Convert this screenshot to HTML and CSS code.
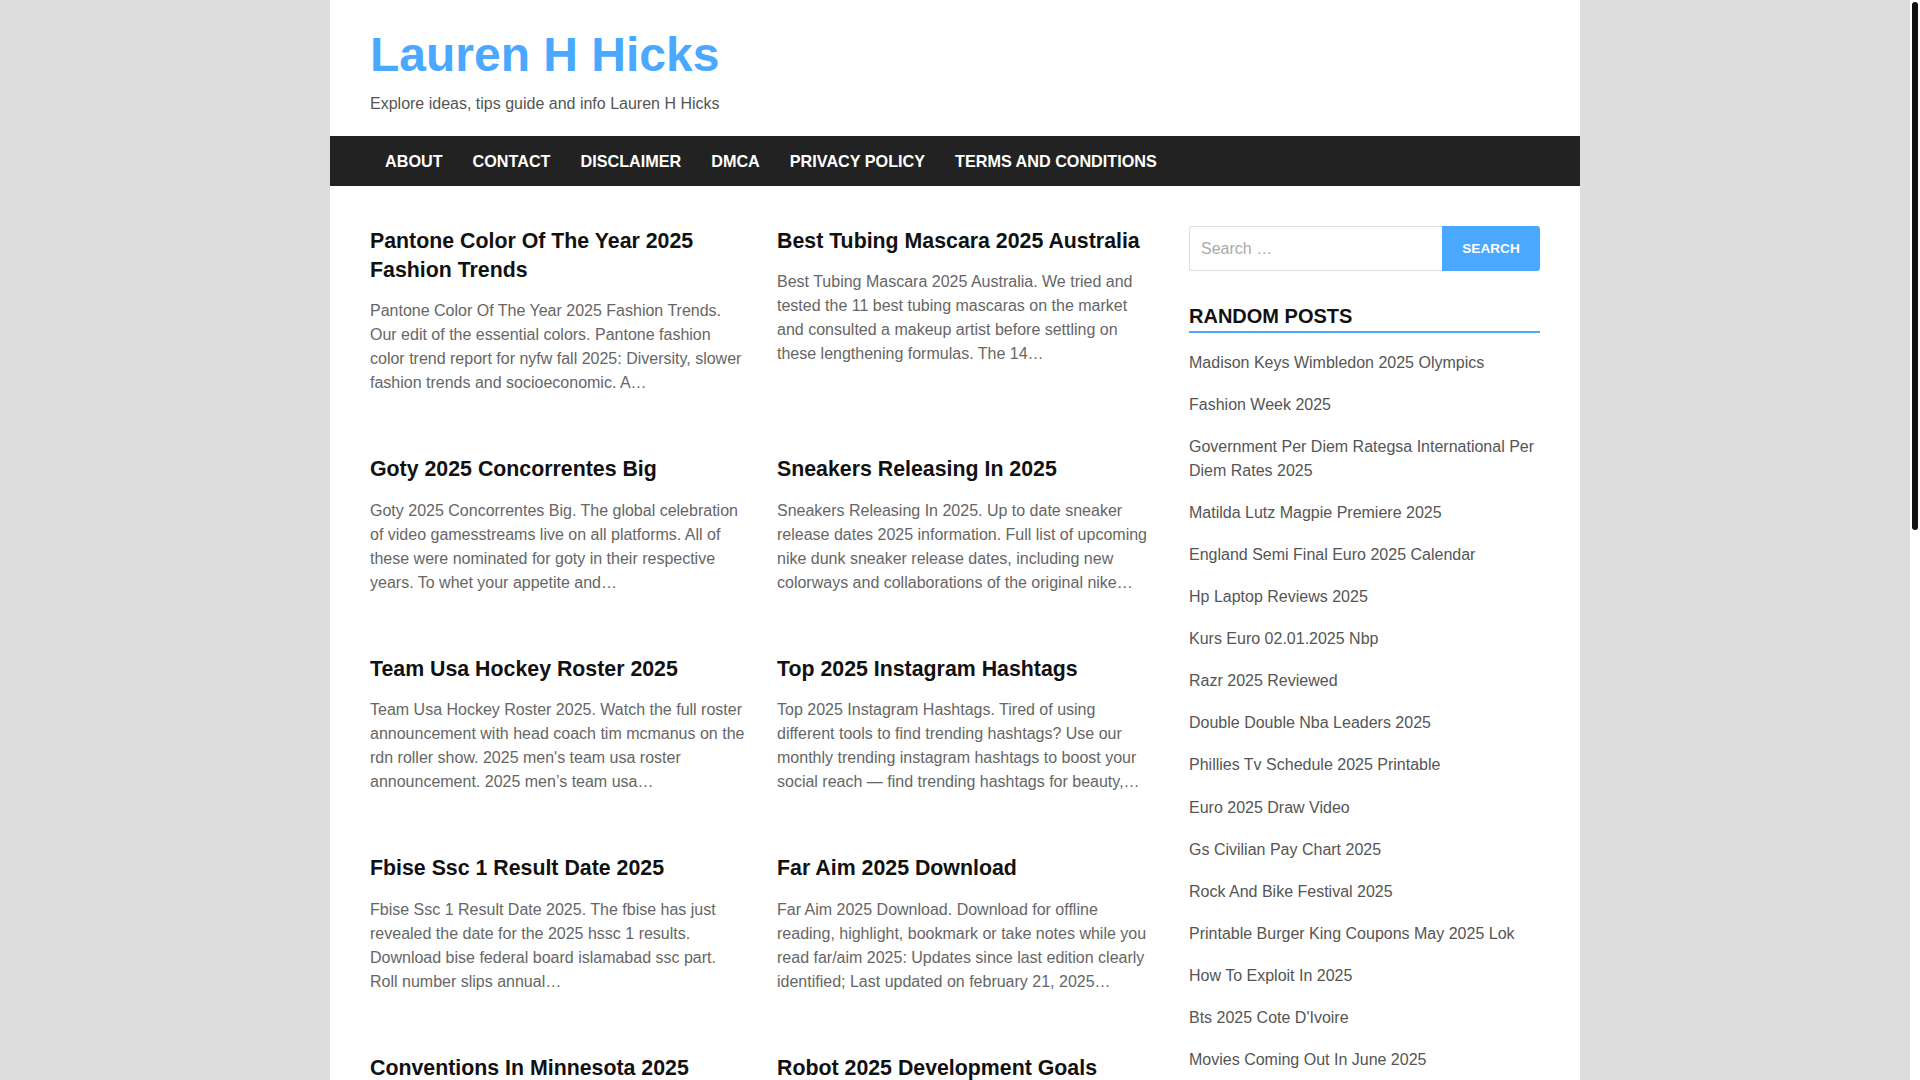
FILE: index.html
```html
<!DOCTYPE html>
<html lang="en">
<head>
<meta charset="utf-8">
<title>Lauren H Hicks</title>
<link rel="stylesheet" href="styles.css">
</head>
<body>
<div class="page">
  <header class="site-header">
    <h1 class="site-title">Lauren H Hicks</h1>
    <p class="tagline">Explore ideas, tips guide and info Lauren H Hicks</p>
  </header>
  <nav class="main-nav">
    <ul>
      <li><a href="#">About</a></li>
      <li><a href="#">Contact</a></li>
      <li><a href="#">Disclaimer</a></li>
      <li><a href="#">DMCA</a></li>
      <li><a href="#">Privacy Policy</a></li>
      <li><a href="#">Terms and Conditions</a></li>
    </ul>
  </nav>
  <div class="content-wrap">
    <main class="posts">
      <article class="post">
        <h2 class="post-title">Pantone Color Of The Year 2025 Fashion Trends</h2>
        <p class="post-excerpt">Pantone Color Of The Year 2025 Fashion Trends. Our edit of the essential colors. Pantone fashion color trend report for nyfw fall 2025: Diversity, slower fashion trends and socioeconomic. A…</p>
      </article>
      <article class="post">
        <h2 class="post-title">Best Tubing Mascara 2025 Australia</h2>
        <p class="post-excerpt">Best Tubing Mascara 2025 Australia. We tried and tested the 11 best tubing mascaras on the market and consulted a makeup artist before settling on these lengthening formulas. The 14…</p>
      </article>
      <article class="post">
        <h2 class="post-title">Goty 2025 Concorrentes Big</h2>
        <p class="post-excerpt">Goty 2025 Concorrentes Big. The global celebration of video gamesstreams live on all platforms. All of these were nominated for goty in their respective years. To whet your appetite and…</p>
      </article>
      <article class="post">
        <h2 class="post-title">Sneakers Releasing In 2025</h2>
        <p class="post-excerpt">Sneakers Releasing In 2025. Up to date sneaker release dates 2025 information. Full list of upcoming nike dunk sneaker release dates, including new colorways and collaborations of the original nike…</p>
      </article>
      <article class="post">
        <h2 class="post-title">Team Usa Hockey Roster 2025</h2>
        <p class="post-excerpt">Team Usa Hockey Roster 2025. Watch the full roster announcement with head coach tim mcmanus on the rdn roller show. 2025 men's team usa roster announcement. 2025 men’s team usa…</p>
      </article>
      <article class="post">
        <h2 class="post-title">Top 2025 Instagram Hashtags</h2>
        <p class="post-excerpt">Top 2025 Instagram Hashtags. Tired of using different tools to find trending hashtags? Use our monthly trending instagram hashtags to boost your social reach — find trending hashtags for beauty,…</p>
      </article>
      <article class="post">
        <h2 class="post-title">Fbise Ssc 1 Result Date 2025</h2>
        <p class="post-excerpt">Fbise Ssc 1 Result Date 2025. The fbise has just revealed the date for the 2025 hssc 1 results. Download bise federal board islamabad ssc part. Roll number slips annual…</p>
      </article>
      <article class="post">
        <h2 class="post-title">Far Aim 2025 Download</h2>
        <p class="post-excerpt">Far Aim 2025 Download. Download for offline reading, highlight, bookmark or take notes while you read far/aim 2025: Updates since last edition clearly identified; Last updated on february 21, 2025…</p>
      </article>
      <article class="post">
        <h2 class="post-title">Conventions In Minnesota 2025</h2>
        <p class="post-excerpt">Conventions In Minnesota 2025. Find the best conventions, expos and fan events taking place across minnesota this year, with dates, venues and ticket information for every…</p>
      </article>
      <article class="post">
        <h2 class="post-title">Robot 2025 Development Goals</h2>
        <p class="post-excerpt">Robot 2025 Development Goals. The roadmap sets out the key research and development goals for robotics, covering autonomy, safety and human interaction in the years…</p>
      </article>
      <article class="post">
        <h2 class="post-title">Madison Keys Wimbledon 2025 Olympics</h2>
        <p class="post-excerpt">Madison Keys Wimbledon 2025 Olympics. Follow the latest results, draws and match schedules as the american star prepares for another season on the grass courts and…</p>
      </article>
      <article class="post">
        <h2 class="post-title">Fashion Week 2025</h2>
        <p class="post-excerpt">Fashion Week 2025. Everything you need to know about the shows, the designers and the trends from new york, london, milan and paris, plus the best street style moments from…</p>
      </article>
      <article class="post">
        <h2 class="post-title">Hp Laptop Reviews 2025</h2>
        <p class="post-excerpt">Hp Laptop Reviews 2025. We tested the latest hp laptops for performance, battery life, display quality and value to help you pick the right machine for work, study and…</p>
      </article>
      <article class="post">
        <h2 class="post-title">Razr 2025 Reviewed</h2>
        <p class="post-excerpt">Razr 2025 Reviewed. The new foldable brings a bigger cover screen, improved cameras and a longer lasting battery. Here is what we liked and what we didn't after two weeks of…</p>
      </article>
      <article class="post">
        <h2 class="post-title">Euro 2025 Draw Video</h2>
        <p class="post-excerpt">Euro 2025 Draw Video. Watch the full draw ceremony again and see how the groups were formed, which teams face each other first and the complete fixture list for the…</p>
      </article>
      <article class="post">
        <h2 class="post-title">Rock And Bike Festival 2025</h2>
        <p class="post-excerpt">Rock And Bike Festival 2025. The festival returns with three days of live music, custom bike shows and stunt riding. Check the line up, camping options and ticket prices before…</p>
      </article>
      <article class="post">
        <h2 class="post-title">How To Exploit In 2025</h2>
        <p class="post-excerpt">How To Exploit In 2025. A practical guide to getting the most out of the year ahead, with tips on planning, productivity and the tools that can help you reach your…</p>
      </article>
      <article class="post">
        <h2 class="post-title">Movies Coming Out In June 2025</h2>
        <p class="post-excerpt">Movies Coming Out In June 2025. From summer blockbusters to indie gems, here is the complete list of films hitting theaters and streaming services this month, with release…</p>
      </article>
      <nav class="pagination">
        <span class="page-num current">1</span>
        <a class="page-num" href="#">2</a>
        <a class="page-num" href="#">3</a>
        <a class="page-num next" href="#">Next &raquo;</a>
      </nav>
    </main>
    <aside class="sidebar">
      <form class="search-form">
        <input class="search-field" type="search" placeholder="Search …">
        <button class="search-submit" type="button">Search</button>
      </form>
      <section class="widget">
        <h3 class="widget-title">Random Posts</h3>
        <ul class="widget-list">
          <li><a href="#">Madison Keys Wimbledon 2025 Olympics</a></li>
          <li><a href="#">Fashion Week 2025</a></li>
          <li><a href="#">Government Per Diem Rategsa International Per Diem Rates 2025</a></li>
          <li><a href="#">Matilda Lutz Magpie Premiere 2025</a></li>
          <li><a href="#">England Semi Final Euro 2025 Calendar</a></li>
          <li><a href="#">Hp Laptop Reviews 2025</a></li>
          <li><a href="#">Kurs Euro 02.01.2025 Nbp</a></li>
          <li><a href="#">Razr 2025 Reviewed</a></li>
          <li><a href="#">Double Double Nba Leaders 2025</a></li>
          <li><a href="#">Phillies Tv Schedule 2025 Printable</a></li>
          <li><a href="#">Euro 2025 Draw Video</a></li>
          <li><a href="#">Gs Civilian Pay Chart 2025</a></li>
          <li><a href="#">Rock And Bike Festival 2025</a></li>
          <li><a href="#">Printable Burger King Coupons May 2025 Lok</a></li>
          <li><a href="#">How To Exploit In 2025</a></li>
          <li><a href="#">Bts 2025 Cote D'Ivoire</a></li>
          <li><a href="#">Movies Coming Out In June 2025</a></li>
        </ul>
      </section>
    </aside>
  </div>
  <footer class="site-footer">
    <p>Copyright &copy; 2025 Lauren H Hicks</p>
  </footer>
</div>
<div class="scroll-track" aria-hidden="true"><div class="scroll-thumb"></div></div>
</body>
</html>
```
FILE: styles.css
```css
html {
  background: #dddddd;
}

::-webkit-scrollbar {
  display: none;
  width: 0;
}

body {
  margin: 0 10px 0 0;
  background: #dddddd;
  font-family: "Liberation Sans", Arial, sans-serif;
  font-size: 16px;
  line-height: 1.5;
  color: #555555;
}

a {
  text-decoration: none;
  color: inherit;
}

.page {
  width: 1250px;
  margin: 0 auto;
  background: #ffffff;
}

/* Scrollbar overlay (window chrome) */
.scroll-track {
  position: fixed;
  top: 0;
  right: 0;
  width: 10px;
  height: 100vh;
  background: #ffffff;
}

.scroll-thumb {
  position: absolute;
  top: 2px;
  left: 2px;
  width: 6px;
  height: 528px;
  border-radius: 3px;
  background: #111111;
}

/* Header */
.site-header {
  padding: 26px 40px 20px;
}

.site-title {
  margin: 0 0 8px;
  font-size: 48px;
  line-height: 1.2;
  font-weight: bold;
  color: #4aa8ff;
}

.tagline {
  margin: 0;
  font-size: 16px;
  line-height: 24px;
  color: #555555;
}

/* Navigation */
.main-nav {
  background: #222222;
  padding: 0 40px;
}

.main-nav ul {
  display: flex;
  margin: 0;
  padding: 0;
  list-style: none;
}

.main-nav a {
  display: block;
  padding: 0 15px;
  line-height: 50px;
  font-size: 16.2px;
  font-weight: bold;
  text-transform: uppercase;
  color: #ffffff;
}

/* Layout */
.content-wrap {
  display: flex;
  align-items: flex-start;
  justify-content: space-between;
  padding: 40px 40px 50px;
}

.posts {
  width: 783px;
  flex: none;
  display: grid;
  grid-template-columns: 376px 376px;
  column-gap: 31px;
  row-gap: 59px;
}

.post-title {
  margin: 0;
  padding-top: 1px;
  font-size: 21.33px;
  line-height: 29.4px;
  font-weight: bold;
  color: #111111;
}

.post-excerpt {
  margin: 14px 0 0;
  font-size: 16px;
  line-height: 24px;
  color: #666666;
}

.pagination {
  grid-column: 1 / -1;
  display: flex;
  gap: 8px;
}

.page-num {
  display: block;
  padding: 0 14px;
  line-height: 40px;
  border: 1px solid #dddddd;
  border-radius: 3px;
  color: #555555;
}

.page-num.current {
  background: #4aa8ff;
  border-color: #4aa8ff;
  color: #ffffff;
}

/* Sidebar */
.sidebar {
  width: 351px;
  flex: none;
}

.search-form {
  display: flex;
  height: 45px;
  margin: 0;
}

.search-field {
  flex: 1;
  min-width: 0;
  box-sizing: border-box;
  height: 45px;
  margin: 0;
  padding: 1px 11px 0;
  border: 1px solid #dddddd;
  border-right: none;
  border-radius: 3px 0 0 3px;
  font-family: "Liberation Sans", Arial, sans-serif;
  font-size: 16px;
  color: #555555;
  outline: none;
}

.search-field::placeholder {
  color: #aaaaaa;
}

.search-submit {
  width: 98px;
  height: 45px;
  margin: 0;
  padding: 0;
  border: none;
  border-radius: 0 3px 3px 0;
  background: #4aa8ff;
  color: #ffffff;
  font-family: "Liberation Sans", Arial, sans-serif;
  font-size: 13.6px;
  font-weight: bold;
  text-transform: uppercase;
}

.widget-title {
  margin: 30px 0 0;
  padding: 0;
  font-size: 20px;
  line-height: 30px;
  font-weight: bold;
  text-transform: uppercase;
  color: #111111;
  border-bottom: 2px solid #4aa8ff;
}

.widget-list {
  margin: 18px 0 0;
  padding: 0;
  list-style: none;
}

.widget-list li {
  margin: 0 0 18.1px;
  font-size: 16px;
  line-height: 24px;
  color: #555555;
}

/* Footer */
.site-footer {
  background: #222222;
  padding: 30px 40px;
}

.site-footer p {
  margin: 0;
  font-size: 14px;
  line-height: 24px;
  color: #bbbbbb;
}
```
